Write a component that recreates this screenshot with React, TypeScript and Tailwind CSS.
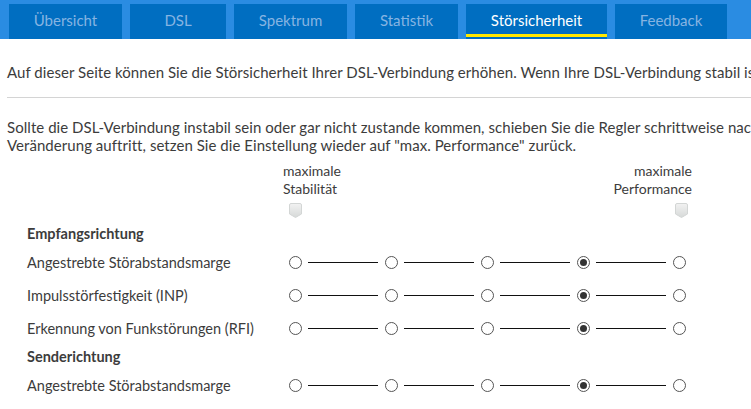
import React from 'react';

const tabs = [
    { label: 'Übersicht', w: 'w-[113px]' },
    { label: 'DSL', w: 'w-[96px]' },
    { label: 'Spektrum', w: 'w-[113px]' },
    { label: 'Statistik', w: 'w-[103px]' },
    { label: 'Störsicherheit', w: 'w-[141px]', active: true },
    { label: 'Feedback', w: 'w-[112px]' },
];

type Row = { kind: 'head'; label: string } | { kind: 'row'; label: string; value: number };

const rows: Row[] = [
    { kind: 'head', label: 'Empfangsrichtung' },
    { kind: 'row', label: 'Angestrebte Störabstandsmarge', value: 3 },
    { kind: 'row', label: 'Impulsstörfestigkeit (INP)', value: 3 },
    { kind: 'row', label: 'Erkennung von Funkstörungen (RFI)', value: 3 },
    { kind: 'head', label: 'Senderichtung' },
    { kind: 'row', label: 'Angestrebte Störabstandsmarge', value: 3 },
];

function Radio({ checked }: { checked: boolean }) {
    return (
        <span className="flex items-center justify-center w-[13px] h-[13px] rounded-full border border-[#555] bg-white shrink-0">
            {checked && <span className="w-[7px] h-[7px] rounded-full bg-[#333]" />}
        </span>
    );
}

function Handle() {
    return (
        <svg width="13" height="15" viewBox="0 0 13 15">
            <defs>
                <linearGradient id="hg" x1="0" y1="0" x2="0" y2="1">
                    <stop offset="0" stopColor="#f2f2f2" />
                    <stop offset="1" stopColor="#d6d9d8" />
                </linearGradient>
            </defs>
            <path d="M2 0.5 H11 Q12.5 0.5 12.5 2 V11 L6.5 14.5 L0.5 11 V2 Q0.5 0.5 2 0.5 Z" fill="url(#hg)" stroke="#d3d6d5" />
        </svg>
    );
}

export default function App() {
    return (
        <div className="w-[751px] h-[409px] overflow-hidden bg-white text-[#3c3c3c] text-[15px] font-['Lato','Liberation_Sans',sans-serif]">
            {/* Tabs */}
            <div className="flex gap-2 h-[39px] pt-[4px] pl-[9px] bg-[#2a8ce2]">
                {tabs.map(t => (
                    <div
                        key={t.label}
                        className={`${t.w} shrink-0 relative flex items-center justify-center pb-[3px] bg-[#006ec1] ${t.active ? 'text-white' : 'text-[#86b4e2]'}`}
                    >
                        {t.label}
                        {t.active && <span className="absolute left-0 right-0 bottom-[2px] h-[3px] bg-[#ffe800]" />}
                    </div>
                ))}
            </div>

            <div className="pl-[7px]">
                <p className="mt-[23px] whitespace-nowrap leading-[20px] tracking-[0.05px]">
                    Auf dieser Seite können Sie die Störsicherheit Ihrer DSL-Verbindung erhöhen. Wenn Ihre DSL-Verbindung stabil ist
                </p>
                <div className="mt-[15px] h-px bg-[#d4d4d4]" />
                <p className="mt-[20px] whitespace-nowrap leading-[18px] tracking-[0.05px]">
                    Sollte die DSL-Verbindung instabil sein oder gar nicht zustande kommen, schieben Sie die Regler schrittweise nach
                    <br />
                    Veränderung auftritt, setzen Sie die Einstellung wieder auf "max. Performance" zurück.
                </p>

                {/* scale header */}
                <div className="flex pl-[276px] mt-[8px] text-[14px]">
                    <div className="w-[409px] flex justify-between leading-[18px]">
                        <div className="flex flex-col items-start">
                            <span>maximale</span>
                            <span>Stabilität</span>
                            <span className="ml-[6px] mt-[5px] flex"><Handle /></span>
                        </div>
                        <div className="flex flex-col items-end">
                            <span>maximale</span>
                            <span>Performance</span>
                            <span className="mr-[4px] mt-[5px] flex"><Handle /></span>
                        </div>
                    </div>
                </div>

                <div className="pl-[20px] mt-[4px] text-[14.5px]">
                    {rows.map((r, i) =>
                        r.kind === 'head' ? (
                            <div key={i} className="h-[24px] flex items-center font-bold">{r.label}</div>
                        ) : (
                            <div key={i} className="h-[33px] flex items-center">
                                <span className="w-[262px] shrink-0">{r.label}</span>
                                {[0, 1, 2, 3, 4].map(n => (
                                    <React.Fragment key={n}>
                                        {n > 0 && <span className="w-[70px] h-px bg-[#111] ml-[6px] mr-[7px]" />}
                                        <Radio checked={n === r.value} />
                                    </React.Fragment>
                                ))}
                            </div>
                        ),
                    )}
                </div>
            </div>
        </div>
    );
}
